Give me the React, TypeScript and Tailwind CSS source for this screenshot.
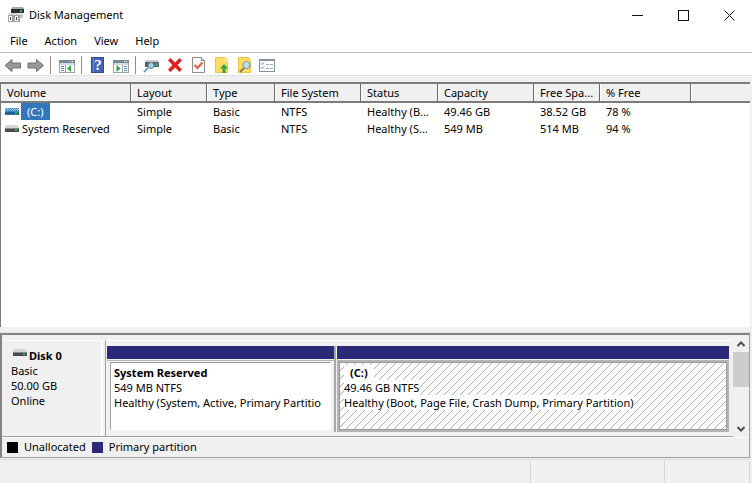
import type { ReactNode } from "react";

const columns = [
  { title: "Volume", width: "w-[130px]" },
  { title: "Layout", width: "w-[76px]" },
  { title: "Type", width: "w-[68px]" },
  { title: "File System", width: "w-[86px]" },
  { title: "Status", width: "w-[77px]" },
  { title: "Capacity", width: "w-[96px]" },
  { title: "Free Spa...", width: "w-[66px]" },
  { title: "% Free", width: "w-[91px]" },
  { title: "", width: "" },
];

const volumes = [
  { name: "(C:)", selected: true, cells: ["Simple", "Basic", "NTFS", "Healthy (B...", "49.46 GB", "38.52 GB", "78 %", ""] },
  { name: "System Reserved", selected: false, cells: ["Simple", "Basic", "NTFS", "Healthy (S...", "549 MB", "514 MB", "94 %", ""] },
];

function DriveIcon({ selected = false }: { selected?: boolean }) {
  return (
    <svg viewBox="0 0 14 7" className="h-[7px] w-[14px] shrink-0" shapeRendering="crispEdges" aria-hidden="true">
      <path d="M1 0h12l1 3H0z" fill={selected ? "#a9cfea" : "#d3d5d6"} />
      <rect y="3" width="14" height="4" fill={selected ? "#1f6196" : "#4a4d50"} />
      <rect y="3" width="14" height="1" fill={selected ? "#3b83bd" : "#85878a"} />
      <rect x="10" y="4" width="2" height="2" fill="#2fb04f" />
      {selected && <path d="M1 .5h13M0 1.500h14M1 2.500h13M0 6.500h14" strokeDasharray="1 1" stroke="#2f7fbe" />}
    </svg>
  );
}

function Tool({ label, children }: { label: string; children: ReactNode }) {
  return (
    <button type="button" aria-label={label} className="flex w-[23px] justify-center">
      <svg viewBox="0 0 17 18" className="h-[18px] w-[17px]" aria-hidden="true">
        {children}
      </svg>
    </button>
  );
}

function Divider() {
  return <span className="mx-[3px] h-[18px] w-[2px] border-l border-[#8d8d8d]" />;
}

function Frame() {
  return (
    <>
      <rect x="1.5" y="4.5" width="15" height="12" fill="#fff" stroke="#9aa3ad" />
      <rect x="1" y="4" width="16" height="3" fill="#76879b" />
      <rect x="12" y="5" width="1" height="1" fill="#fff" />
      <rect x="14" y="5" width="1" height="1" fill="#fff" />
      <rect x="2" y="7" width="14" height="2" fill="#d5dbe1" />
    </>
  );
}

function Toolbar() {
  const arrow = "M1 9.5 8 3.5V7h8.500v5H8v3.500z";
  return (
    <div role="toolbar" className="flex h-[22px] items-start bg-white pt-[3px] pl-px">
      <Tool label="Back">
        <path d={arrow} fill="#999" stroke="#707070" />
      </Tool>
      <Tool label="Forward">
        <path d={arrow} transform="translate(17.500 0) scale(-1 1)" fill="#999" stroke="#707070" />
      </Tool>
      <Divider />
      <Tool label="Show or hide console tree">
        <Frame />
        <path d="M3 10.500h3M3 12.500h3M3 14.500h3" stroke="#4d8ac6" />
        <path d="M7.500 9v7" stroke="#9aa3ad" />
        <path d="m9 12.500 4-3.500v7z" fill="#2fa33a" />
      </Tool>
      <Divider />
      <Tool label="Help">
        <rect x="2.500" y="1.500" width="12" height="15" fill="#4265b6" stroke="#2f4d97" />
        <path d="M4.500 2v14" stroke="#6f8cd0" />
        <text x="9" y="14" textAnchor="middle" fill="#fff" className="font-['Liberation_Serif',serif] text-[15px] font-bold">?</text>
      </Tool>
      <Tool label="Show or hide action pane">
        <Frame />
        <path d="M12 10.500h3M12 12.500h3M12 14.500h3" stroke="#4d8ac6" />
        <path d="M10.500 9v7" stroke="#9aa3ad" />
        <path d="m8.500 12.500-4-3.500v7z" fill="#2fa33a" />
      </Tool>
      <Divider />
      <Tool label="Rescan disks">
        <path d="M3 4h12l1 2H2z" fill="#c8cbcd" />
        <rect x="2" y="6" width="14" height="5" fill="#5a6065" />
        <rect x="12" y="7" width="3" height="3" fill="#35a07a" />
        <path d="m5 12-4 4" stroke="#6da4c6" strokeWidth="2" />
        <circle cx="8" cy="9.500" r="3" fill="#a5d3ec" stroke="#5e8298" />
      </Tool>
      <Tool label="Delete">
        <path d="M2 4.500 4.500 2 9 6.500 13.500 2 16 4.500 11.500 9l4.500 4.500-2.500 2.500L9 11.500 4.500 16 2 13.500 6.500 9z" fill="#e02020" />
      </Tool>
      <Tool label="Properties">
        <path d="M3.500 1.500h9l3 3v12h-12z" fill="#fafafa" stroke="#8d8d8d" />
        <path d="M12.500 1.500v3h3" fill="#ddd" stroke="#8d8d8d" />
        <path d="m5.500 9 3 3 5-5.500" fill="none" stroke="#e8603a" strokeWidth="2" />
      </Tool>
      <Tool label="Attach disk">
        <path d="M3.500 1.500h10l2 3v12h-12z" fill="#fbdb63" stroke="#eac54a" />
        <path d="M13 1.500v4h3" fill="none" stroke="#fff1b5" />
        <path d="m12 8 4 4.500h-2.500V17h-3v-4.500H8z" fill="#37a23c" />
      </Tool>
      <Tool label="Browse folder">
        <path d="M3.500 1.500h10l2 3v12h-12z" fill="#fbdb63" stroke="#eac54a" />
        <path d="m9 12-4 4" stroke="#8a7a54" strokeWidth="2" />
        <circle cx="11.500" cy="9" r="3.500" fill="#b9dff2" stroke="#7796a5" />
      </Tool>
      <Tool label="View settings">
        <rect x="1.500" y="3.500" width="15" height="12" fill="#fff" stroke="#84929e" />
        <path d="M1 4h16" stroke="#84929e" strokeWidth="2" />
        <path d="m3 7.500 1 1 2-2M3 11.500l1 1 2-2" fill="none" stroke="#2f86cf" />
        <path d="M8 8.500h3M12 8.500h3M8 12.500h3M12 12.500h3" stroke="#9aa7b2" />
      </Tool>
    </div>
  );
}

function TitleBar() {
  const glyph = "size-[11px]";
  return (
    <header className="flex h-[30px] items-center pl-2">
      <svg viewBox="0 0 16 16" className="size-4" aria-hidden="true">
        <path d="M4 0h11l1 2H3z" fill="#a8acae" />
        <rect x="3" y="2" width="13" height="4" fill="#2b2e30" />
        <rect x="12" y="3" width="2" height="2" fill="#31c552" />
        <path d="M0 8h12v7H0z" fill="#a2a2a2" />
        <path d="M1 6h10l1 2H0z" fill="#d8d8d8" />
        <path d="M1 9h3v5H1zM7 9h3v5H7z" fill="#fff" />
        <path d="M2.500 10v3M8.500 10v3" stroke="#444" />
        <path d="M12 7h3v4h-3z" fill="#c6c6c6" />
      </svg>
      <h1 className="ml-[5px] flex-1">Disk Management</h1>
      <button type="button" aria-label="Minimize" className="flex h-[29px] w-[46px] items-center justify-center">
        <svg viewBox="0 0 11 11" className={glyph}><path d="M0 5.500h11" stroke="#111" /></svg>
      </button>
      <button type="button" aria-label="Maximize" className="flex h-[29px] w-[46px] items-center justify-center">
        <svg viewBox="0 0 11 11" className={glyph}><rect x=".5" y=".5" width="10" height="10" fill="none" stroke="#111" /></svg>
      </button>
      <button type="button" aria-label="Close" className="flex h-[29px] w-[46px] items-center justify-center">
        <svg viewBox="0 0 11 11" className={glyph}><path d="m.5.5 10 10m0-10-10 10" stroke="#111" /></svg>
      </button>
    </header>
  );
}

function VolumeTable() {
  return (
    <section className="mr-[2px] flex-1 overflow-hidden border-t-2 border-l border-[#7c7c7c] bg-white">
      <table className="w-full table-fixed border-separate border-spacing-0 text-left">
        <thead>
          <tr className="h-[19px] bg-[#f0f0f0]">
            {columns.map((c) => (
              <th key={c.title} scope="col" className={`${c.width} border-r border-b-2 border-r-[#696969] border-b-[#7c7c7c] p-0 font-normal last:border-r-0`}>
                <div className="h-[17px] border-l border-white pl-[5px] leading-[17px] whitespace-nowrap">{c.title}</div>
              </th>
            ))}
          </tr>
        </thead>
        <tbody>
          {volumes.map((v) => (
            <tr key={v.name} className="h-[17px]">
              <td className="p-0">
                <div className="flex items-center gap-[2px] pl-1 leading-[17px] whitespace-nowrap">
                  <DriveIcon selected={v.selected} />
                  <span className={v.selected ? "bg-[#3377bd] px-[6px] text-white" : "pl-px"}>{v.name}</span>
                </div>
              </td>
              {v.cells.map((cell, i) => (
                <td key={i} className="overflow-hidden p-0 pl-[6px] leading-[17px] whitespace-nowrap">{cell}</td>
              ))}
            </tr>
          ))}
        </tbody>
      </table>
    </section>
  );
}

function Partition({ size, width, name, info, status, selected = false }: {
  size: string; width: string; name: string; info: string; status: string; selected?: boolean;
}) {
  const mark = selected ? "bg-white" : "";
  return (
    <div className={`${width} flex min-w-0 flex-col`} aria-label={size}>
      <div className="h-[13px] bg-[#2a2a78]" />
      <div className={`mt-px flex-1 border-t ${selected ? "border-[#b4b4b4] bg-[#b4b4b4] p-[2px] pt-px" : "border-[#b4b4b4] bg-[#f0f0f0] px-[3px] pt-px pb-[2px]"}`}>
        <div
          className={`h-full overflow-hidden border pt-[2px] leading-[15px] whitespace-nowrap ${
            selected
              ? "border-[#9a9a9a] bg-white bg-[linear-gradient(135deg,transparent_45%,#acacac_45%,#acacac_55%,transparent_55%)] bg-[length:8px_8px] pl-1"
              : "border-[#a0a0a0] border-r-white border-b-white bg-white pl-[3px]"
          }`}
        >
          <p className="font-bold"><span className={`${mark} ${selected ? "px-[6px]" : ""}`}>{name}</span></p>
          <p><span className={mark}>{info}</span></p>
          <p><span className={mark}>{status}</span></p>
        </div>
      </div>
    </div>
  );
}

function ScrollBar() {
  return (
    <div className="flex w-4 flex-col bg-[#f0f0f0]">
      <button type="button" aria-label="Scroll up" className="flex h-[17px] items-center justify-center">
        <svg viewBox="0 0 8 6" className="h-[6px] w-2"><path d="M.5 5 4 1.500 7.500 5" fill="none" stroke="#505050" strokeWidth="2" /></svg>
      </button>
      <div className="h-[35px] bg-[#cdcdcd]" />
      <button type="button" aria-label="Scroll down" className="mt-auto flex h-[17px] items-center justify-center">
        <svg viewBox="0 0 8 6" className="h-[6px] w-2"><path d="M.5 1 4 4.500 7.500 1" fill="none" stroke="#505050" strokeWidth="2" /></svg>
      </button>
    </div>
  );
}

function DiskView() {
  return (
    <section className="mr-[2px] border-t-2 border-r border-b border-l-2 border-[#848484] border-r-[#a0a0a0] border-b-[#a0a0a0]">
      <div className="flex h-[102px]">
        <div className="flex min-w-0 flex-1 border-b border-[#a0a0a0] pt-[5px]">
          <div className="mb-px w-[101px] border-t border-r-2 border-white pt-[7px] pl-[9px] leading-[15px]">
            <h2 className="flex gap-[2px] pl-[2px] font-bold"><span className="pt-px"><DriveIcon /></span>Disk 0</h2>
            <p>Basic</p>
            <p>50.00 GB</p>
            <p>Online</p>
          </div>
          <div className="ml-[2px] flex min-w-0 flex-1 border-t border-l border-t-white border-l-[#a0a0a0] pt-[5px] pr-1 pb-1 pl-px">
            <Partition size="549 MB" width="w-[227px]" name="System Reserved" info="549 MB NTFS" status="Healthy (System, Active, Primary Partitio" />
            <div className="mr-px w-[2px] bg-[#a8a8a8]" />
            <Partition size="49.46 GB" width="flex-1" name="(C:)" info="49.46 GB NTFS" status="Healthy (Boot, Page File, Crash Dump, Primary Partition)" selected />
          </div>
        </div>
        <ScrollBar />
      </div>
      <div className="flex h-5 items-center gap-[6px] border-t border-white pl-[5px]">
        <span className="size-[11px] bg-black" />
        <span>Unallocated</span>
        <span className="size-[11px] bg-[#2a2a78]" />
        <span>Primary partition</span>
      </div>
    </section>
  );
}

export default function App() {
  return (
    <div className="flex h-screen flex-col bg-white font-['Noto_Sans','Open_Sans',sans-serif] text-[11px] text-black">
      <TitleBar />
      <nav className="flex h-[22px] items-center gap-[17px] pl-[10px]">
        {["File", "Action", "View", "Help"].map((m) => (
          <button key={m} type="button">{m}</button>
        ))}
      </nav>
      <div className="border-t border-b border-t-[#bdbdbd] border-b-[#e2e2e2]"><Toolbar /></div>
      <main className="flex flex-1 flex-col bg-[#f0f0f0] pt-[6px]">
        <VolumeTable />
        <div className="h-[6px] border-b border-[#e2e2e2] bg-[#f0f0f0]" />
        <DiskView />
      </main>
      <footer className="bg-[#f0f0f0] pt-px pr-[2px]">
        <div className="flex h-6 border-t border-[#dcdcdc] pt-px">
          <span className="flex-1 border-r border-[#d7d7d7]" />
          <span className="w-[134px] border-r border-[#d7d7d7]" />
          <span className="w-[85px] border-r border-[#d7d7d7]" />
        </div>
      </footer>
    </div>
  );
}
